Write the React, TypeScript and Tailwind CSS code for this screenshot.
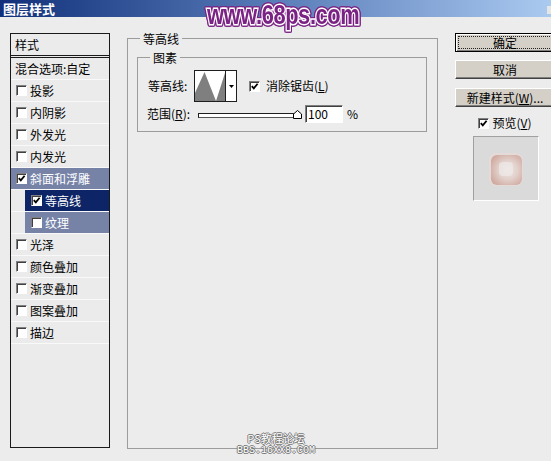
import React from "react";

function Check({ on }: { on?: boolean }) {
  return (
    <span className="flex h-[11px] w-[11px] shrink-0 items-center justify-center border border-t-[#808080] border-l-[#808080] border-b-white border-r-white bg-white shadow-[inset_1px_1px_0_#404040]">
      {on && (
        <svg width="9" height="9" viewBox="0 0 9 9">
          <path d="M1.8 4.2 L3.8 6.4 L7.6 1.8" stroke="#000" strokeWidth="1.8" fill="none" />
        </svg>
      )}
    </span>
  );
}

type RowProps = { label: string; on?: boolean; tone?: "slate" | "navy"; sub?: boolean };

function Row({ label, on, tone, sub }: RowProps) {
  const bg = tone === "slate" ? "bg-[#7683a7] text-white" : tone === "navy" ? "bg-[#0d2566] text-white" : "";
  return (
    <div className="flex h-[22px] border-b border-[#f9f9f9]">
      <div className={`flex flex-1 items-center ${sub ? "ml-[14px] pl-[6px]" : "pl-[5px]"} ${bg}`}>
        <Check on={on} />
        <span className="ml-[3px] leading-[14px]">{label}</span>
      </div>
    </div>
  );
}

function Btn({ children, def, className = "" }: { children: React.ReactNode; def?: boolean; className?: string }) {
  if (def) {
    return (
      <div className={`flex h-[19px] w-[100px] shrink-0 border border-black bg-[#d4d0c8] p-[2px] shadow-[inset_1px_1px_0_#fff,inset_-1px_-1px_0_#808080] ${className}`}>
        <div className="flex flex-1 items-center justify-center border border-dotted border-[#222] leading-[13px]">{children}</div>
      </div>
    );
  }
  return (
    <div className={`flex h-[19px] w-[100px] shrink-0 items-center justify-center border border-t-white border-l-white border-b-[#404040] border-r-[#404040] bg-[#d4d0c8] leading-[14px] shadow-[inset_-1px_-1px_0_#808080] ${className}`}>
      {children}
    </div>
  );
}

export default function App() {
  return (
    <div className="relative h-[461px] w-[551px] overflow-hidden bg-[#ececec] font-['Noto_Sans_CJK_SC',sans-serif] text-[12px] text-black">
      {/* title bar */}
      <div className="flex h-[17px] items-center bg-linear-to-r from-[#12307a] via-[#5a7cb8] to-[#aacaf0]">
        <span className="pl-[3px] text-[13px] font-bold leading-none text-white">图层样式</span>
        <span className="ml-auto mt-[2px] h-[8px] w-[4px] bg-[#e6e6e6]" />
      </div>

      <div className="flex items-start">
        {/* left list */}
        <div className="ml-[10px] mt-[16px] flex h-[415px] w-[100px] shrink-0 flex-col border border-[#1a1a1a] bg-[#ebebeb]">
          <div className="flex h-[22px] items-center border-b border-[#1a1a1a] pl-[4px] leading-[14px]">样式</div>
          <div className="mt-[1px] flex-1 border-t border-[#1a1a1a]">
            <div className="flex h-[22px] items-center border-b border-[#f9f9f9] pl-[4px] leading-[14px]">混合选项:自定</div>
            <Row label="投影" />
            <Row label="内阴影" />
            <Row label="外发光" />
            <Row label="内发光" />
            <Row label="斜面和浮雕" on tone="slate" />
            <Row label="等高线" on tone="navy" sub />
            <Row label="纹理" tone="slate" sub />
            <Row label="光泽" />
            <Row label="颜色叠加" />
            <Row label="渐变叠加" />
            <Row label="图案叠加" />
            <Row label="描边" />
          </div>
        </div>

        {/* middle group */}
        <fieldset className="ml-[17px] mt-[13px] h-[419px] w-[311px] shrink-0 border border-[#9c9c9c]">
          <legend className="ml-[12px] px-[3px] leading-[17px]">等高线</legend>
          <fieldset className="ml-[9px] mt-[2px] w-[290px] border border-[#9c9c9c] pb-[8px]">
            <legend className="ml-[12px] px-[3px] leading-[17px]">图素</legend>
            <div className="mt-[4px] flex items-center pl-[10px]">
              <span className="w-[46px] leading-[14px]">等高线:</span>
              <div className="flex h-[32px] w-[43px] border border-[#1e1e1e] bg-white">
                <svg width="30" height="30" viewBox="0 0 30 30">
                  <path d="M0 30 L0 22 L9.5 1 L21 30 L30 2 L30 30 Z" fill="#7f7f7f" />
                </svg>
                <div className="w-px bg-[#1e1e1e]" />
                <div className="flex flex-1 items-center justify-center">
                  <svg width="5" height="3" viewBox="0 0 5 3">
                    <path d="M0 0 L5 0 L2.5 3 Z" fill="#000" />
                  </svg>
                </div>
              </div>
              <span className="ml-[12px]">
                <Check on />
              </span>
              <span className="ml-[6px] leading-[14px]">
                消除锯齿(<u>L</u>)
              </span>
            </div>
            <div className="mt-[3px] flex h-[18px] items-center pl-[9px]">
              <span className="w-[51px] leading-[14px]">
                范围(<u>R</u>):
              </span>
              <div className="relative flex h-[18px] w-[104px] items-center">
                <div className="mt-[3px] h-[5px] w-[102px] border border-t-[#1e1e1e] border-l-[#1e1e1e] border-b-[#555] border-r-[#555] bg-white" />
                <svg className="absolute left-[95px] top-[5px]" width="9" height="9" viewBox="0 0 9 9">
                  <path d="M0.5 8.5 L0.5 4 L4.5 0.5 L8.5 4 L8.5 8.5 Z" fill="#fff" stroke="#000" />
                </svg>
              </div>
              <div className="ml-[3px] flex h-[18px] w-[38px] items-center border border-t-[#808080] border-l-[#808080] border-b-white border-r-white bg-white pl-[2px] leading-[14px] shadow-[inset_1px_1px_0_#404040]">
                100
              </div>
              <span className="ml-[4px] leading-[14px]">%</span>
            </div>
          </fieldset>
        </fieldset>

        {/* right column */}
        <div className="ml-[17px] mt-[16px] flex w-[100px] shrink-0 flex-col">
          <Btn def>确定</Btn>
          <Btn className="mt-[8px]">取消</Btn>
          <Btn className="mt-[9px]">
            新建样式(<u>W</u>)...
          </Btn>
          <div className="mt-[8px] flex h-[16px] items-center justify-center">
            <Check on />
            <span className="ml-[3px] leading-[14px]">
              预览(<u>V</u>)
            </span>
          </div>
          <div className="ml-[18px] mt-[5px] h-[65px] w-[66px] border border-t-[#a0a0a0] border-l-[#a0a0a0] border-b-white border-r-white bg-[#dadada]">
            <svg width="64" height="63" viewBox="0 0 64 63">
              <defs>
                <radialGradient id="pv" cx="0.55" cy="0.5" r="0.62">
                  <stop offset="0" stopColor="#ece6e4" />
                  <stop offset="0.5" stopColor="#e2d0cb" />
                  <stop offset="1" stopColor="#d0aaa0" />
                </radialGradient>
              </defs>
              <rect x="15" y="16" width="34" height="33" rx="7" fill="#e4dbd8" />
              <rect x="17" y="18" width="31" height="30" rx="6" fill="url(#pv)" />
              <rect x="25" y="25" width="14" height="14" rx="4" fill="#eeeae9" opacity="0.7" />
            </svg>
          </div>
        </div>
      </div>

      {/* watermarks */}
      <div className="absolute left-[207px] top-[1px] origin-left scale-x-[0.78] whitespace-nowrap font-['Liberation_Sans',sans-serif] text-[28px] font-bold leading-[28px] tracking-[-0.5px] text-[#7a2384] [-webkit-text-stroke:3px_white] [paint-order:stroke_fill] [filter:drop-shadow(1px_0_0_#7a2384)_drop-shadow(-1px_0_0_#7a2384)_drop-shadow(0_1px_0_#7a2384)_drop-shadow(0_-1px_0_#7a2384)]">
        www.68ps.com
      </div>
      <div className="absolute left-[232px] top-[433px] flex w-[88px] flex-col items-center gap-[1px] text-white [text-shadow:1px_0_#777,-1px_0_#777,0_1px_#777,0_-1px_#777]">
        <span className="text-[11px] leading-[11px]">PS教程论坛</span>
        <span className="font-['Liberation_Mono',monospace] text-[10px] leading-[11px]">BBS.16XX8.COM</span>
      </div>
    </div>
  );
}
